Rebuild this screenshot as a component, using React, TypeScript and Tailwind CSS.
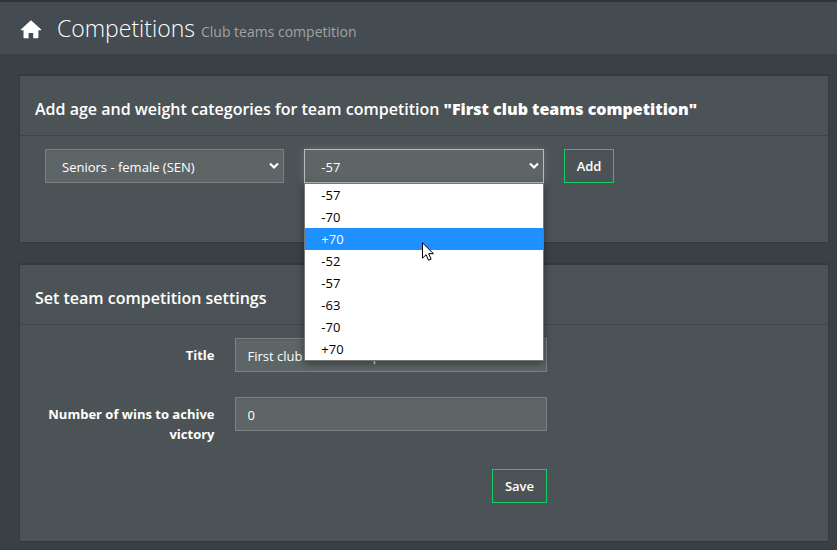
import { useState } from 'react';
import type { ReactNode } from 'react';

const weights = ['-57', '-70', '+70', '-52', '-57', '-63', '-70', '+70'];

const fieldClass =
    'block h-[34px] w-full border border-[#7b8283] bg-[#5e6567] text-[13px] text-white shadow-[inset_0_1px_1px_rgba(0,0,0,0.08)] outline-none';

const buttonClass =
    'h-[34px] border border-[#0fd062] px-3 pt-0.5 text-[13px] font-semibold text-white hover:bg-[#0fd062]/20';

function Chevron() {
    return (
        <svg className="pointer-events-none absolute top-3 right-1 h-2.5 w-3" viewBox="0 0 12 10" fill="none" stroke="#fff" strokeWidth="2.2">
            <path d="M2 2.5 6 6.5 10 2.5" />
        </svg>
    );
}

function Panel({ title, children }: { title: ReactNode; children: ReactNode }) {
    return (
        <section className="border border-t-2 border-[#35393c] bg-[#4c5356]">
            <h2 className="border-b border-[#3f4649] px-[15px] pt-[19px] pb-3 text-[16px] leading-7 font-semibold text-white">{title}</h2>
            <div className="px-[15px] pt-[13px]">{children}</div>
        </section>
    );
}

export default function App() {
    const [age, setAge] = useState('SEN');
    const [weight, setWeight] = useState(0);
    const [active, setActive] = useState(2);
    const [title, setTitle] = useState('First club teams competition');
    const [wins, setWins] = useState('0');

    return (
        <div className="min-h-screen border-t-2 border-b-2 border-t-[#2f3638] border-b-[#3d3d42] bg-[#3a4144] font-['Open_Sans','Noto_Sans',sans-serif]">
            <header className="flex h-[52px] items-center bg-[#444b51] pt-1 pl-[19px]">
                <svg className="h-6 w-6 fill-white" viewBox="0 0 24 24">
                    <path d="M12 2.2 1.8 11.4q-.3.8.4.8h2.3v7.2q0 .8.8.8h4.3v-5.3h4.6v5.3h4.4q.8 0 .8-.8v-7.2h2.4q.7 0 .4-.8z" />
                </svg>
                <h1 className="ml-3.5 text-[23px] leading-8 font-light text-white">
                    Competitions <small className="text-[14px] font-normal text-[#a2a3a4]">Club teams competition</small>
                </h1>
            </header>

            <main className="flex flex-col gap-5 pt-5 pr-2 pb-1.5 pl-[19px]">
                <Panel title={<>Add age and weight categories for team competition <b>"First club teams competition"</b></>}>
                    <form className="grid grid-cols-3 gap-5 px-2.5 pb-[59px]" onSubmit={(e) => e.preventDefault()}>
                        <div className="relative">
                            <select
                                aria-label="Age category"
                                className={`${fieldClass} appearance-none pt-1 pl-4`}
                                value={age}
                                onChange={(e) => setAge(e.target.value)}
                            >
                                <option value="SEN">Seniors - female (SEN)</option>
                            </select>
                            <Chevron />
                        </div>
                        <div className="relative">
                            <select
                                aria-label="Weight category"
                                className="block h-[34px] w-full appearance-none border border-[#b9bcbd] bg-[#5e6567] pt-1 pl-4 text-[13px] text-white shadow-[0_0_8px_rgba(255,255,255,0.15)] outline-none"
                                value={weight}
                                onChange={(e) => setWeight(Number(e.target.value))}
                            >
                                {weights.map((w, i) => (
                                    <option key={i} value={i}>{w}</option>
                                ))}
                            </select>
                            <Chevron />
                            <ul role="listbox" aria-label="Weight category" className="absolute inset-x-0 top-full z-10 border border-[#767676] bg-white shadow-[0_3px_8px_rgba(0,0,0,0.4)]">
                                {weights.map((w, i) => (
                                    <li
                                        key={i}
                                        role="option"
                                        aria-selected={i === active}
                                        onMouseEnter={() => setActive(i)}
                                        onClick={() => setWeight(i)}
                                        className={`h-[22px] pl-4 text-[13px] leading-[22px] ${i === active ? 'bg-[#1e90ff] text-white' : 'text-black'}`}
                                    >
                                        {w}
                                    </li>
                                ))}
                            </ul>
                            <svg className="pointer-events-none absolute top-[93px] left-[118px] z-20 h-[19px] w-3" viewBox="0 0 12 19">
                                <path d="M.5.8v15.4l3.6-3.5 2.4 5.5 2.6-1.1-2.4-5.4h4.8z" fill="#fff" stroke="#000" />
                            </svg>
                        </div>
                        <div>
                            <button type="submit" className={buttonClass}>Add</button>
                        </div>
                    </form>
                </Panel>

                <Panel title="Set team competition settings">
                    <form className="grid grid-cols-12 gap-x-5 pb-[38px] text-[13px] text-white" onSubmit={(e) => e.preventDefault()}>
                        <label htmlFor="title" className="col-span-3 pt-[7px] text-right leading-5 font-bold">Title</label>
                        <div className="col-span-5">
                            <input id="title" type="text" className={`${fieldClass} px-3 pt-0.5`} value={title} onChange={(e) => setTitle(e.target.value)} />
                        </div>
                        <label htmlFor="wins" className="col-span-3 col-start-1 mt-[25px] pt-[7px] text-right leading-5 font-bold">
                            Number of wins to achive victory
                        </label>
                        <div className="col-span-5 mt-[25px]">
                            <input id="wins" type="text" className={`${fieldClass} px-3 pt-0.5`} value={wins} onChange={(e) => setWins(e.target.value)} />
                        </div>
                        <div className="col-span-8 col-start-1 mt-[25px] text-right">
                            <button type="submit" className={buttonClass}>Save</button>
                        </div>
                    </form>
                </Panel>
            </main>
        </div>
    );
}
